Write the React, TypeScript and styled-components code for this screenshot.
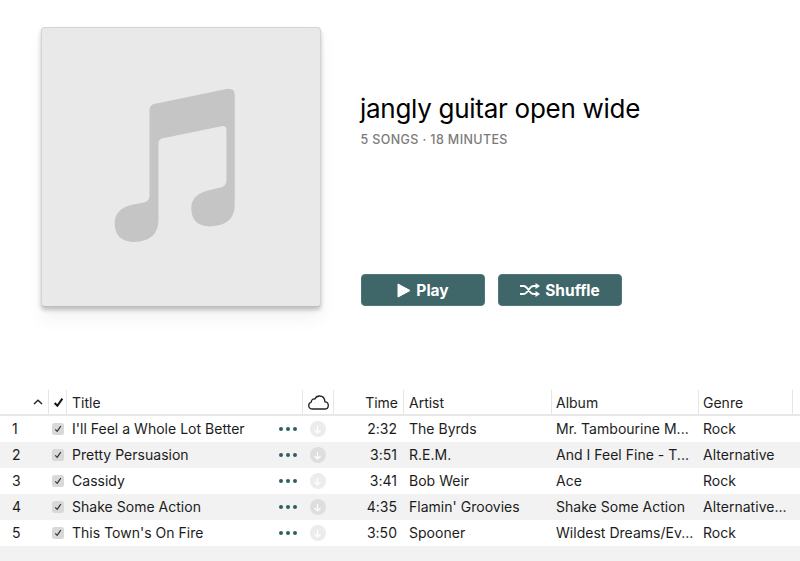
import React from "react";
import styled, { createGlobalStyle } from "styled-components";

const GlobalStyle = createGlobalStyle`
  html, body {
    margin: 0;
    padding: 0;
    background: #fff;
    overflow: hidden;
  }
  body {
    font-family: Inter, "Liberation Sans", sans-serif;
    color: #1c1c1c;
  }
`;

const Page = styled.div`
  width: 800px;
  height: 561px;
  display: flex;
  flex-direction: column;
  background: #fff;
`;

const Hero = styled.div`
  display: flex;
  height: 390px;
  padding: 27px 0 0 41px;
  box-sizing: border-box;
`;

const Artwork = styled.div`
  width: 280px;
  height: 280px;
  box-sizing: border-box;
  background: #e9e9e9;
  border: 1px solid #d4d4d4;
  border-bottom-color: #bdbdbd;
  border-radius: 4px;
  box-shadow: 0 3px 4px rgba(0, 0, 0, 0.22), 0 12px 18px rgba(0, 0, 0, 0.05);
  overflow: hidden;

  svg {
    display: block;
    width: 100%;
    height: 100%;
  }
`;

const Info = styled.div`
  margin-left: 39px;
  height: 280px;
  display: flex;
  flex-direction: column;
`;

const Heading = styled.h1`
  margin: 64px 0 0;
  font-size: 26px;
  line-height: 36px;
  font-weight: 400;
  letter-spacing: -0.28px;
  color: #000;
`;

const Meta = styled.div`
  margin: 5px 0 0 0.5px;
  font-size: 12.5px;
  line-height: 16px;
  font-weight: 500;
  letter-spacing: 0.38px;
  color: #7b7b7b;
`;

const Actions = styled.div`
  margin: auto 0 0 1px;
  padding-bottom: 1px;
  display: flex;
  gap: 13px;
`;

const ActionButton = styled.button`
  width: 124px;
  height: 32px;
  padding: 0;
  display: flex;
  align-items: center;
  justify-content: center;
  gap: 5px;
  font-family: inherit;
  font-size: 15.5px;
  font-weight: 700;
  color: #fff;
  background: #3f6669;
  border: 1px solid #4f7679;
  border-radius: 4px;
`;

const Table = styled.div`
  display: flex;
  flex-direction: column;
  flex: 1;
  background: #f2f2f2;
`;

const columns = "49px 18px 236px 31px 70px 148px 147px 94px 7px";

const HeaderRow = styled.div`
  display: grid;
  grid-template-columns: ${columns};
  height: 26px;
  box-sizing: border-box;
  background: #fff;
  border-bottom: 2px solid #e8e8e8;
`;

const HeaderCell = styled.div<{ $end?: boolean; $center?: boolean; $plain?: boolean; $pad?: number }>`
  display: flex;
  align-items: center;
  justify-content: ${(p) => (p.$center ? "center" : p.$end ? "flex-end" : "flex-start")};
  height: 24px;
  box-sizing: border-box;
  padding: ${(p) => (p.$end ? "0 6px 0 0" : p.$center ? "0" : `0 0 0 ${p.$pad ?? 5}px`)};
  font-size: 14px;
  color: #222;
  box-shadow: ${(p) => (p.$plain ? "none" : "inset -1px 0 0 #e6e6e6")};
`;

const Row = styled.div<{ $odd: boolean }>`
  display: grid;
  grid-template-columns: ${columns};
  height: 26px;
  box-sizing: border-box;
  padding-bottom: 2px;
  align-items: center;
  background: ${(p) => (p.$odd ? "#fff" : "#f2f2f2")};
  font-size: 14px;
  letter-spacing: 0.02px;
  color: #1c1c1c;
`;

const Cell = styled.div<{ $pad?: number }>`
  padding-left: ${(p) => p.$pad ?? 4}px;
  min-width: 0;
  white-space: nowrap;
  overflow: hidden;
`;

const NumberCell = styled.div`
  padding-left: 12px;
`;

const TimeCell = styled.div`
  text-align: right;
  padding-right: 7px;
`;

const CheckCell = styled.div`
  display: flex;
  justify-content: center;
  margin-top: 2px;
`;

const CheckBox = styled.span`
  width: 12px;
  height: 12px;
  border-radius: 2.5px;
  background: #d9d9d9;
  display: flex;
  align-items: center;
  justify-content: center;

  svg {
    display: block;
  }
`;

const TitleCell = styled.div`
  display: flex;
  align-items: center;
  justify-content: space-between;
  padding: 0 6px 0 5px;
`;

const Dots = styled.span`
  display: flex;
  gap: 3px;
  margin-top: 2px;
`;

const Dot = styled.span`
  width: 4px;
  height: 4px;
  border-radius: 50%;
  background: #2f5f62;
`;

const CloudCell = styled.div`
  display: flex;
  justify-content: center;
  margin-top: 2px;
  padding-right: 2px;
`;

const Download = styled.span<{ $odd: boolean }>`
  width: 16px;
  height: 16px;
  border-radius: 50%;
  background: ${(p) => (p.$odd ? "#ececec" : "#dedede")};
  display: flex;
  align-items: center;
  justify-content: center;
`;

const tracks = [
  { n: 1, title: "I'll Feel a Whole Lot Better", time: "2:32", artist: "The Byrds", album: "Mr. Tambourine M...", genre: "Rock" },
  { n: 2, title: "Pretty Persuasion", time: "3:51", artist: "R.E.M.", album: "And I Feel Fine - T...", genre: "Alternative" },
  { n: 3, title: "Cassidy", time: "3:41", artist: "Bob Weir", album: "Ace", genre: "Rock" },
  { n: 4, title: "Shake Some Action", time: "4:35", artist: "Flamin' Groovies", album: "Shake Some Action", genre: "Alternative..." },
  { n: 5, title: "This Town's On Fire", time: "3:50", artist: "Spooner", album: "Wildest Dreams/Ev...", genre: "Rock" },
];

const MusicNote = () => (
  <svg viewBox="64 52 838 838">
    <path
      fill="#c5c5c5"
      d="M405 280L620 236Q645 232 645 255L645 585Q645 648 570 650Q514 648 514 595Q514 552 570 540L605 532Q620 528 620 512L620 360Q620 345 605 348L428 384Q415 387 415 400L415 630Q415 695 340 697Q283 695 283 640Q283 598 335 585L372 578Q388 574 388 558L388 298Q388 284 405 280Z"
    />
  </svg>
);

const PlayIcon = () => (
  <svg width="14" height="15" viewBox="0 0 14 15">
    <path fill="#fff" stroke="#fff" strokeWidth="1" strokeLinejoin="round" d="M1 1L13 7.500L1 14Z" />
  </svg>
);

const ShuffleIcon = () => (
  <svg width="20" height="14" viewBox="0 0 20 14">
    <path
      fill="none"
      stroke="#fff"
      strokeWidth="2"
      d="M0 3H3.500C5 3 6 3.700 7 5L10.500 9.500C11.400 10.700 12.300 11 14 11H16M0 11H3.500C5 11 6 10.300 7 9L10.500 4.500C11.400 3.300 12.300 3 14 3H16"
    />
    <path fill="#fff" d="M15.500 0L20 3L15.500 6ZM15.500 8L20 11L15.500 14Z" />
  </svg>
);

const Chevron = () => (
  <svg width="10" height="6" viewBox="0 0 10 6">
    <path fill="none" stroke="#222" strokeWidth="1.400" d="M1 5L5 1.300L9 5" />
  </svg>
);

const Tick = ({ size, weight, color }: { size: number; weight: number; color: string }) => (
  <svg width={size} height={size} viewBox="0 0 10 10">
    <path fill="none" stroke={color} strokeWidth={weight} d="M1.500 5.500L4 8L8.500 1.500" />
  </svg>
);

const CloudIcon = () => (
  <svg width="21" height="15" viewBox="0 0 21 15">
    <path
      fill="none"
      stroke="#222"
      strokeWidth="1.300"
      d="M5 14H16.500C18.700 14 20.300 12.400 20.300 10.400C20.300 8.400 18.800 7 17 6.900C16.700 3.500 14.500 1 11.500 1C9.300 1 7.700 2.200 6.800 4C4.300 3.700 3.300 5.500 3.300 7C1.700 7.600 0.700 8.900 0.700 10.500C0.700 12.500 2.500 14 5 14Z"
    />
  </svg>
);

const ArrowDown = () => (
  <svg width="9" height="9" viewBox="0 0 9 9">
    <path fill="none" stroke="#fff" strokeWidth="1.200" d="M4.500 1V8M1.500 5L4.500 8L7.500 5" />
  </svg>
);

export default function App() {
  return (
    <Page>
      <GlobalStyle />
      <Hero>
        <Artwork>
          <MusicNote />
        </Artwork>
        <Info>
          <Heading>jangly guitar open wide</Heading>
          <Meta>5 SONGS · 18 MINUTES</Meta>
          <Actions>
            <ActionButton>
              <PlayIcon />
              Play
            </ActionButton>
            <ActionButton>
              <ShuffleIcon />
              Shuffle
            </ActionButton>
          </Actions>
        </Info>
      </Hero>
      <Table>
        <HeaderRow>
          <HeaderCell $end>
            <Chevron />
          </HeaderCell>
          <HeaderCell $center>
            <Tick size={11} weight={1.8} color="#111" />
          </HeaderCell>
          <HeaderCell>Title</HeaderCell>
          <HeaderCell $center>
            <CloudIcon />
          </HeaderCell>
          <HeaderCell $end>Time</HeaderCell>
          <HeaderCell>Artist</HeaderCell>
          <HeaderCell $pad={4}>Album</HeaderCell>
          <HeaderCell $pad={4}>Genre</HeaderCell>
          <HeaderCell $plain />
        </HeaderRow>
        {tracks.map((t) => (
          <Row key={t.n} $odd={t.n % 2 === 1}>
            <NumberCell>{t.n}</NumberCell>
            <CheckCell>
              <CheckBox>
                <Tick size={8} weight={1.5} color="#333" />
              </CheckBox>
            </CheckCell>
            <TitleCell>
              {t.title}
              <Dots>
                <Dot />
                <Dot />
                <Dot />
              </Dots>
            </TitleCell>
            <CloudCell>
              <Download $odd={t.n % 2 === 1}>
                <ArrowDown />
              </Download>
            </CloudCell>
            <TimeCell>{t.time}</TimeCell>
            <Cell $pad={5}>{t.artist}</Cell>
            <Cell>{t.album}</Cell>
            <Cell>{t.genre}</Cell>
            <div />
          </Row>
        ))}
      </Table>
    </Page>
  );
}
